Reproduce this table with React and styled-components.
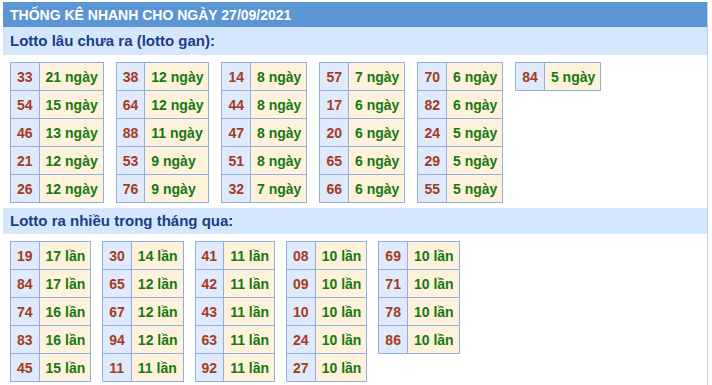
import React from 'react'
import styled, { createGlobalStyle } from 'styled-components'

const Global = createGlobalStyle`
  body {
    margin: 0;
    background: #fff;
    font-family: "Liberation Sans", Arial, sans-serif;
  }
`

const Panel = styled.div`
  width: 704px;
  margin: 2px 0 0 3px;
  border-right: 1px solid #c9cdd6;
  min-height: 380px;
`

const Title = styled.div`
  height: 25px;
  background: #5b96d4;
  color: #fff;
  font-weight: bold;
  font-size: 14px;
  line-height: 26px;
  padding-left: 7px;
`

const SubTitle = styled.div`
  height: ${p => p.h || 28}px;
  background: #d4e7fc;
  color: #1b3c8a;
  font-weight: bold;
  font-size: 15px;
  line-height: ${p => p.h || 28}px;
  padding-left: 7px;
`

const Tables = styled.div`
  display: flex;
  align-items: flex-start;
  gap: ${p => p.gap}px;
  padding: 7px 0 5px 7px;
`

const Table = styled.table`
  border-collapse: collapse;
  font-size: 14px;
  font-weight: bold;
`

const Num = styled.td`
  height: 27px;
  padding: 0 6px;
  background: #dfeafc;
  color: #a53b1f;
  border: 1px solid #93aee0;
  white-space: nowrap;
`

const Val = styled.td`
  height: 27px;
  padding: 0 5px 0 6px;
  background: #fef2dd;
  color: #17790f;
  border: 1px solid #93aee0;
  white-space: nowrap;
`

const gan = [
  [['33', 21], ['54', 15], ['46', 13], ['21', 12], ['26', 12]],
  [['38', 12], ['64', 12], ['88', 11], ['53', 9], ['76', 9]],
  [['14', 8], ['44', 8], ['47', 8], ['51', 8], ['32', 7]],
  [['57', 7], ['17', 6], ['20', 6], ['65', 6], ['66', 6]],
  [['70', 6], ['82', 6], ['24', 5], ['29', 5], ['55', 5]],
  [['84', 5]]
]

const nhieu = [
  [['19', 17], ['84', 17], ['74', 16], ['83', 16], ['45', 15]],
  [['30', 14], ['65', 12], ['67', 12], ['94', 12], ['11', 11]],
  [['41', 11], ['42', 11], ['43', 11], ['63', 11], ['92', 11]],
  [['08', 10], ['09', 10], ['10', 10], ['24', 10], ['27', 10]],
  [['69', 10], ['71', 10], ['78', 10], ['86', 10]]
]

const Group = ({ data, unit, gap }) => (
  <Tables gap={gap}>
    {data.map((col, i) => (
      <Table key={i}>
        <tbody>
          {col.map(([n, v]) => (
            <tr key={n}>
              <Num>{n}</Num>
              <Val>{v} {unit}</Val>
            </tr>
          ))}
        </tbody>
      </Table>
    ))}
  </Tables>
)

export default function App() {
  return (
    <>
      <Global />
      <Panel>
        <Title>THỐNG KÊ NHANH CHO NGÀY 27/09/2021</Title>
        <SubTitle>Lotto lâu chưa ra (lotto gan):</SubTitle>
        <Group data={gan} unit="ngày" gap={12} />
        <SubTitle h={26}>Lotto ra nhiều trong tháng qua:</SubTitle>
        <Group data={nhieu} unit="lần" gap={11} />
      </Panel>
    </>
  )
}
